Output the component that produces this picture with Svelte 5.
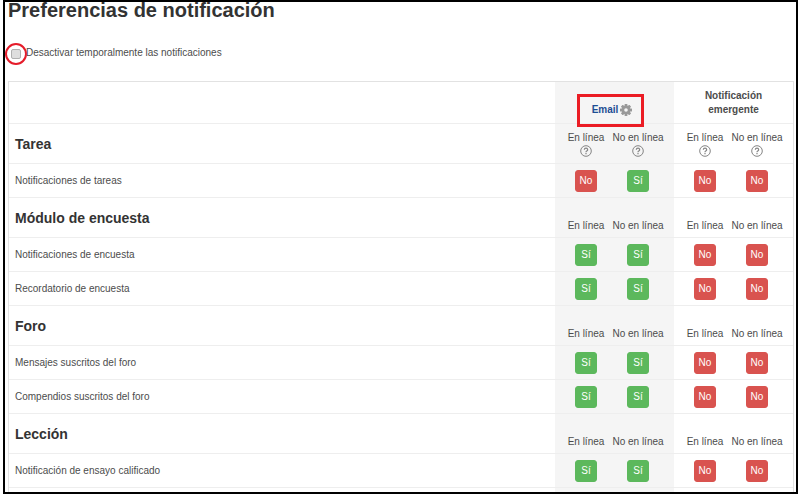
<script lang="ts">
	type Setting = { online: boolean; offline: boolean };
	type Preference = { id: string; name: string; email: Setting; popup: Setting };
	type Component = { name: string; help?: boolean; preferences: Preference[] };

	const processors = ['email', 'popup'] as const;
	const states = [
		{ key: 'online', label: 'En línea' },
		{ key: 'offline', label: 'No en línea' }
	] as const;
	const gearTeeth = [0, 45, 90, 135];

	let disableAll = $state(false);

	let components: Component[] = $state([
		{
			name: 'Tarea',
			help: true,
			preferences: [
				{
					id: 'assign',
					name: 'Notificaciones de tareas',
					email: { online: false, offline: true },
					popup: { online: false, offline: false }
				}
			]
		},
		{
			name: 'Módulo de encuesta',
			preferences: [
				createPreference('feedback', 'Notificaciones de encuesta'),
				createPreference('reminder', 'Recordatorio de encuesta')
			]
		},
		{
			name: 'Foro',
			preferences: [
				createPreference('posts', 'Mensajes suscritos del foro'),
				createPreference('digests', 'Compendios suscritos del foro')
			]
		},
		{
			name: 'Lección',
			preferences: [createPreference('essay', 'Notificación de ensayo calificado')]
		}
	]);

	function createPreference(id: string, name: string): Preference {
		return {
			id,
			name,
			email: { online: true, offline: true },
			popup: { online: false, offline: false }
		};
	}
</script>

<main class="page">
	<h1>Preferencias de notificación</h1>

	<div class="disable">
		<span class="disable__mark">
			<input id="disable-all" type="checkbox" bind:checked={disableAll} />
		</span>
		<label for="disable-all">Desactivar temporalmente las notificaciones</label>
	</div>

	<table class="preferences">
		<colgroup>
			<col />
			<col class="processor-col" />
			<col class="processor-col" />
		</colgroup>
		<thead>
			<tr>
				<td></td>
				<th class="shaded" scope="col">
					<span class="email">
						<a href="#email">Email</a>
						<button class="gear" type="button" aria-label="Email">
							<svg viewBox="0 0 24 24" width="12" height="12" aria-hidden="true">
								{#each gearTeeth as angle (angle)}
									<rect x="9.2" y="0" width="5.6" height="24" rx="1" fill="#999" transform="rotate({angle} 12 12)" />
								{/each}
								<circle cx="12" cy="12" r="8.8" fill="#999" />
								<circle cx="12" cy="12" r="3.6" fill="#f5f5f5" />
							</svg>
						</button>
						<span class="email__mark"></span>
					</span>
				</th>
				<th scope="col">Notificación emergente</th>
			</tr>
		</thead>
		<tbody>
			{#each components as component (component.name)}
				<tr class="component">
					<th scope="row">{component.name}</th>
					{#each processors as processor (processor)}
						<td class:shaded={processor === 'email'}>
							<div class="pair">
								{#each states as state (state.key)}
									<div class="state">
										<span>{state.label}</span>
										{#if component.help}
											<button class="help" type="button" aria-label={state.label}>
												<svg viewBox="0 0 12 12" width="12" height="12" aria-hidden="true">
													<circle cx="6" cy="6" r="5.3" fill="none" stroke="#858585" />
													<path
														d="M4.3 4.7Q4.4 3.2 6 3.2T7.7 4.7Q7.7 5.4 6.800 5.900T6 7.200"
														fill="none"
														stroke="#858585"
														stroke-width="1.2"
													/>
													<path d="M5.4 8h1.2v1.2H5.4z" fill="#858585" />
												</svg>
											</button>
										{/if}
									</div>
								{/each}
							</div>
						</td>
					{/each}
				</tr>
				{#each component.preferences as preference (preference.id)}
					<tr class="preference">
						<th scope="row">{preference.name}</th>
						{#each processors as processor (processor)}
							<td class:shaded={processor === 'email'}>
								<div class="pair">
									{#each states as state (state.key)}
										<button
											class="toggle"
											class:toggle--on={preference[processor][state.key]}
											type="button"
											disabled={disableAll}
											onclick={() => (preference[processor][state.key] = !preference[processor][state.key])}
										>
											{preference[processor][state.key] ? 'Sí' : 'No'}
										</button>
									{/each}
								</div>
							</td>
						{/each}
					</tr>
				{/each}
			{/each}
			<tr class="preference">
				<td></td>
				<td class="shaded"></td>
				<td></td>
			</tr>
		</tbody>
	</table>
</main>

<style>
	:global(body) {
		background: #ffffff;
	}

	.page {
		box-sizing: border-box;
		height: 100vh;
		overflow: hidden;
		margin: 0 2px 0 3px;
		padding: 0 2px 0 3px;
		border: 2px solid #000000;
		color: #4c4c4c;
		font-family: 'Liberation Sans', Arial, sans-serif;
		font-size: 10px;
		line-height: 14px;
	}

	h1 {
		margin: 0;
		color: #333333;
		font-size: 20px;
		line-height: 16px;
		font-weight: 700;
	}

	.disable {
		display: flex;
		align-items: center;
		height: 22px;
		margin: 25px 0 16px -3px;
	}

	.disable__mark {
		box-sizing: border-box;
		display: flex;
		align-items: center;
		justify-content: center;
		width: 22px;
		height: 22px;
		margin-right: -1px;
		border: 2px solid #e51c2a;
		border-radius: 50%;
	}

	.disable label {
		padding-bottom: 2px;
	}

	.disable input {
		appearance: none;
		box-sizing: border-box;
		width: 10px;
		height: 10px;
		margin: 0;
		border: 1px solid #b0b0b0;
		border-radius: 2px;
		background: #dedede;
	}

	.disable input:checked {
		background: #666666;
	}

	.preferences {
		width: 100%;
		table-layout: fixed;
		border: 1px solid #e2e2e2;
		border-spacing: 0;
	}

	.processor-col {
		width: 119px;
	}

	td,
	th {
		box-sizing: border-box;
		padding: 0;
		border-bottom: 1px solid #eeeeee;
		text-align: left;
	}

	thead th {
		height: 42px;
		padding: 0 16px;
		text-align: center;
		vertical-align: middle;
	}

	thead .shaded {
		padding-right: 21px;
	}

	.shaded {
		background: #f5f5f5;
	}

	.email {
		position: relative;
		display: inline-flex;
		align-items: center;
		gap: 2px;
		padding-top: 14px;
	}

	.email a {
		color: #1d4e94;
		text-decoration: none;
	}

	.email__mark {
		position: absolute;
		inset: 5px -12px -10px -15px;
		border: 3px solid #eb1c24;
		pointer-events: none;
	}

	.gear,
	.help {
		display: block;
		padding: 0;
		border: 0;
		background: none;
	}

	.gear svg,
	.help svg {
		display: block;
		overflow: visible;
	}

	tbody th {
		padding-left: 6px;
		font-weight: 400;
	}

	.component th,
	.component td {
		height: 40px;
	}

	.component th {
		color: #333333;
		font-size: 14px;
		font-weight: 700;
	}

	.component td {
		padding-bottom: 4px;
		vertical-align: bottom;
	}

	.component:first-child td {
		padding-bottom: 6px;
	}

	.preference th,
	.preference td {
		height: 34px;
	}

	.pair {
		display: grid;
		grid-template-columns: 52px 52px;
		justify-items: center;
		padding-left: 5px;
	}

	.state {
		display: flex;
		flex-direction: column;
		align-items: center;
		white-space: nowrap;
	}

	.toggle {
		box-sizing: border-box;
		width: 22px;
		height: 22px;
		padding: 0;
		border: 1px solid #d9534f;
		border-radius: 3px;
		background: #d9534f;
		color: #ffffff;
		font: inherit;
	}

	.toggle--on {
		border-color: #5cb85c;
		background: #5cb85c;
	}
</style>
